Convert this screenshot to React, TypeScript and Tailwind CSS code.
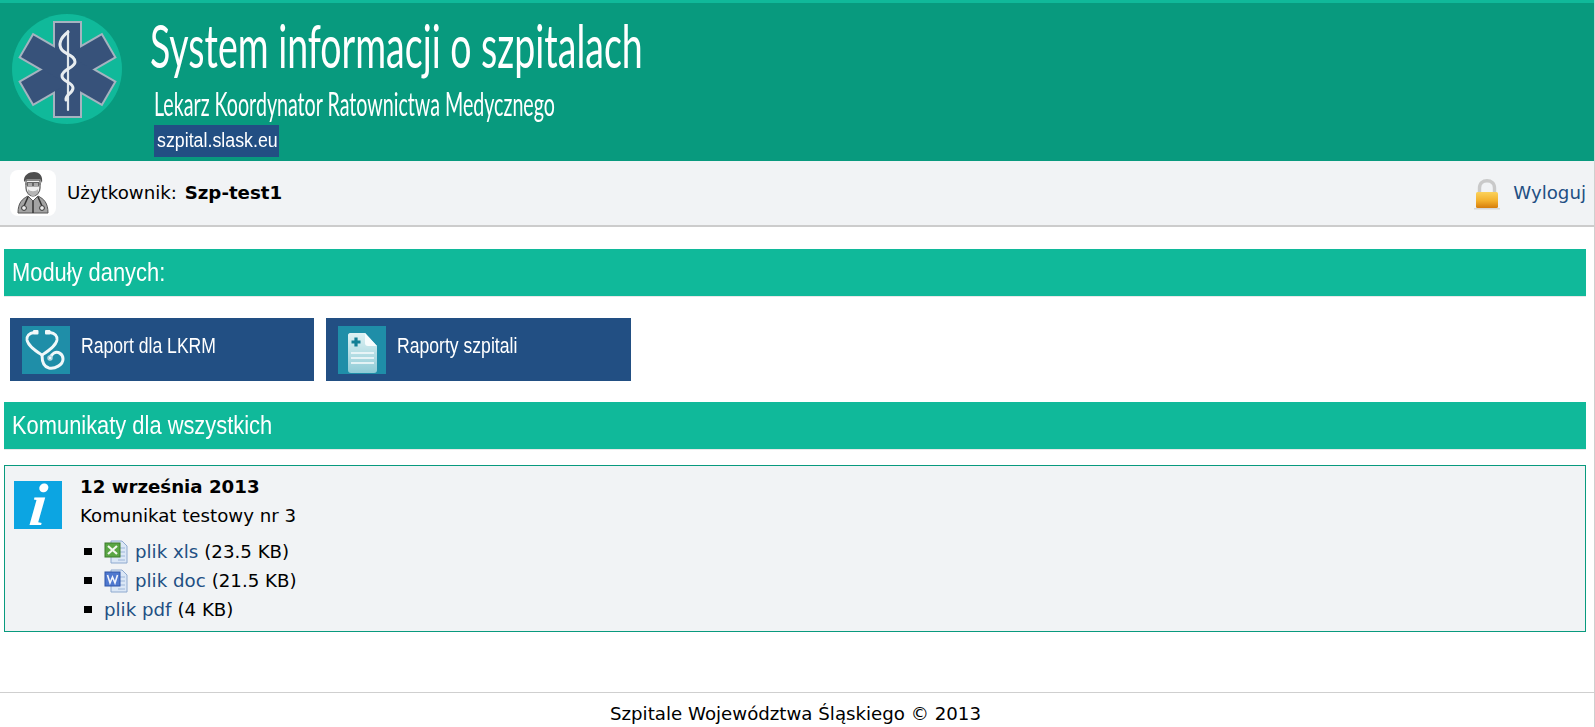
const BASE = "font-['DejaVu_Sans',Verdana,sans-serif]";
const NARROW = "font-['Liberation_Sans',Arial,sans-serif]";

function StarLogo() {
  const angles = [0, 60, 120];
  return (
    <svg width="110" height="110" viewBox="0 0 110 110" className="shrink-0 blur-[0.3px]">
      <circle cx="55" cy="55" r="55" fill="#10b99a" />
      {angles.map((a) => (
        <rect key={a} x="42" y="8" width="27" height="95" fill="#a5b3c0" stroke="#a5b3c0" strokeWidth="2" transform={`rotate(${a} 55.5 55.5)`} />
      ))}
      {angles.map((a) => (
        <rect key={a} x="43" y="9" width="25" height="93" fill="#37527a" transform={`rotate(${a} 55.5 55.5)`} />
      ))}
      <path d="M56 17 L56 96" stroke="#dfe6ea" strokeWidth="2.2" strokeLinecap="round" />
      <path
        d="M56 18 C48 24 46 31 50 36 C54 41 63 41 63 48 C63 54 50 55 50 62 C50 68 61 68 61 74 C61 80 53 80 54 86"
        fill="none"
        stroke="#e8edf0"
        strokeWidth="3"
        strokeLinecap="round"
      />
    </svg>
  );
}

function DoctorAvatar() {
  return (
    <div className="h-[46px] w-[46px] shrink-0 rounded-lg bg-white">
      <svg width="46" height="46" viewBox="0 0 46 46" className="blur-[0.3px]">
        <path d="M14 12 C13 5 19 2 24 2 C30 2 33 6 32 13 L30 9 L17 9 Z" fill="#4f4f4f" />
        <path d="M16 10 L30 10 L30 18 C30 23 26 26 23 26 C20 26 16 23 16 18 Z" fill="#f2f2f2" stroke="#666" strokeWidth="1.3" />
        <path d="M15 14 H31" stroke="#777" strokeWidth="1.2" />
        <rect x="17.5" y="12.5" width="5" height="3.5" fill="none" stroke="#666" />
        <rect x="23.5" y="12.5" width="5" height="3.5" fill="none" stroke="#666" />
        <path d="M18 19 C20 22 26 22 28 19 L28 23 L23 27 L18 23 Z" fill="#b5b5b5" />
        <path d="M8 43 C8 33 12 29 18 26 L23 31 L28 26 C34 29 38 33 38 43 Z" fill="#a3a3a3" stroke="#555" strokeWidth="1" />
        <path d="M18 27 L14 36 M28 27 L32 36 M23 31 V43" stroke="#333" strokeWidth="1.5" fill="none" />
        <circle cx="14" cy="38" r="2.4" fill="#eee" stroke="#333" />
        <circle cx="32" cy="38" r="2.4" fill="#eee" stroke="#333" />
      </svg>
    </div>
  );
}

function LockIcon() {
  return (
    <svg width="28" height="31" viewBox="0 0 28 31" className="mt-[3px] shrink-0">
      <defs>
        <linearGradient id="lockBody" x1="0" y1="0" x2="0" y2="1">
          <stop offset="0" stopColor="#fbd25b" />
          <stop offset="0.55" stopColor="#f3b02c" />
          <stop offset="1" stopColor="#d67d0c" />
        </linearGradient>
      </defs>
      <path d="M6.5 14 V9 C6.5 4 10 1.8 14 1.8 C18 1.8 21.5 4 21.5 9 V14" fill="none" stroke="#c9c9c9" strokeWidth="3.4" />
      <rect x="3" y="13" width="22" height="16" rx="1.5" fill="url(#lockBody)" />
      <rect x="1" y="29" width="26" height="1.5" fill="#bbb" opacity="0.5" />
    </svg>
  );
}

function StethoscopeIcon() {
  return (
    <div className="h-12 w-12 shrink-0 bg-[#1f8ea8]">
      <svg width="48" height="48" viewBox="0 0 48 48" fill="none" stroke="#f0f8fa" strokeLinecap="round">
        <path d="M12 6.5 C7 7 4.5 10 5 14 C6 20 14 25 20 29 C26 25 34 20 35 14 C35.5 10 33 7 28 6.5" strokeWidth="2.8" />
        <path d="M20 29 C20 36 22 41 27 42 C33 43 41 39 41 33 C41 28 36 25 32 27 C30 28 29 30 28 32" strokeWidth="3" />
        <rect x="11" y="4" width="5.5" height="4.5" rx="1" fill="#f0f8fa" strokeWidth="0" />
        <rect x="23" y="4" width="5.5" height="4.5" rx="1" fill="#f0f8fa" strokeWidth="0" />
        <circle cx="28" cy="32" r="2" strokeWidth="1.4" stroke="#b9dbe3" />
      </svg>
    </div>
  );
}

function ReportIcon() {
  return (
    <div className="h-12 w-12 shrink-0 bg-[#1f8ea8]">
      <svg width="48" height="48" viewBox="0 0 48 48">
        <defs>
          <linearGradient id="reportPage" x1="0" y1="0" x2="0" y2="1">
            <stop offset="0" stopColor="#dff2f4" />
            <stop offset="1" stopColor="#8fcbd6" />
          </linearGradient>
        </defs>
        <path d="M12 7 H27 L39 20 V44 C39 46 38 47 36 47 H13 C11 47 10 46 10 44 V9 C10 8 11 7 12 7 Z" fill="url(#reportPage)" />
        <path d="M27 7 L39 20 L30 20 C28 20 27 19 27 17 Z" fill="#f7fcfd" />
        <path d="M18 11.5 V20.5 M13.5 16 H22.5" stroke="#127f95" strokeWidth="3.2" />
        <path d="M13 27 H36 M13 32 H36 M13 37 H36" stroke="#f7fcfd" strokeWidth="1.6" />
      </svg>
    </div>
  );
}

function InfoIcon() {
  return (
    <div className="flex h-12 w-12 shrink-0 items-center justify-center bg-[#0ca5e2]">
      <span className="-skew-x-6 font-['Liberation_Serif',serif] text-[60px] leading-[48px] font-bold text-white italic">i</span>
    </div>
  );
}

function ExcelIcon() {
  return (
    <svg width="24" height="24" viewBox="0 0 24 24" className="shrink-0">
      <path d="M7 1 H18 L23 6 V23 H7 Z" fill="#dbe7f6" stroke="#8ea9cf" />
      <path d="M14 8 H21 M14 12 H21 M14 16 H21 M14 20 H21" stroke="#9db6d8" />
      <rect x="1" y="3" width="15" height="14" fill="#5aa644" stroke="#3d7d2c" />
      <path d="M4 6 L13 14 M13 6 L4 14" stroke="#f3f8ef" strokeWidth="2.2" />
    </svg>
  );
}

function WordIcon() {
  return (
    <svg width="24" height="24" viewBox="0 0 24 24" className="shrink-0">
      <path d="M7 1 H18 L23 6 V23 H7 Z" fill="#dbe7f6" stroke="#8ea9cf" />
      <path d="M14 8 H21 M14 12 H21 M14 16 H21 M14 20 H21" stroke="#9db6d8" />
      <rect x="1" y="3" width="15" height="14" fill="#4f78cf" stroke="#2f55a8" />
      <path d="M3.5 6 L6 14 L8.5 8 L11 14 L13.5 6" fill="none" stroke="#f2f5fc" strokeWidth="1.6" />
    </svg>
  );
}

function SectionHeading({ children }: { children: string }) {
  return (
    <div className="flex h-[47px] items-center bg-[#10b99a] pl-2 shadow-[0_1px_0_#e8e8e8]">
      <span className={`${NARROW} origin-left scale-x-[0.875] text-[25px] leading-none whitespace-nowrap text-white`}>{children}</span>
    </div>
  );
}

function ModuleButton({ label, width, icon }: { label: string; width: string; icon: React.ReactNode }) {
  return (
    <a className={`flex h-[63px] ${width} items-start gap-[11px] bg-[#224f83] pt-2 pl-3`}>
      {icon}
      <span className={`${NARROW} mt-[8px] origin-left scale-x-[0.8] text-[22px] leading-[24px] whitespace-nowrap text-white`}>{label}</span>
    </a>
  );
}

function Attachment({ icon, name, size }: { icon?: React.ReactNode; name: string; size: string }) {
  return (
    <li className="flex h-[29px] items-center">
      <span className="mr-3 h-[7px] w-2 shrink-0 bg-black" />
      {icon && <span className="mr-[7px] flex">{icon}</span>}
      <a className="text-[#224f83]">{name}</a>
      <span className="ml-[6px]">{size}</span>
    </li>
  );
}

export default function App() {
  return (
    <div className={`${BASE} flex h-[727px] flex-col overflow-hidden border-r border-[#cfcfcf] bg-white text-[18.2px] text-black`}>
      <header className="flex h-[161px] shrink-0 border-t-[3px] border-[#10b99a] bg-[#089a7e] pt-[11px] pl-3">
        <StarLogo />
        <div className="ml-[30px] flex flex-col items-start">
          <h1 className="-mt-[4px] -ml-[2px] h-[75px] origin-left scale-x-[0.625] font-['Lato',sans-serif] text-[60px] leading-[70px] font-normal whitespace-nowrap text-white">
            System informacji o szpitalach
          </h1>
          <p className="mt-[3px] ml-[2px] h-[37px] origin-left scale-x-[0.614] font-['Lato',sans-serif] text-[32px] leading-[32px] whitespace-nowrap text-white">
            Lekarz Koordynator Ratownictwa Medycznego
          </p>
          <div className={`${NARROW} ml-[2px] flex h-[32px] w-[125px] items-center bg-[#224f83] pb-[2px] pl-[3px] text-[20px] text-white`}>
            <span className="origin-left scale-x-[0.89] whitespace-nowrap">szpital.slask.eu</span>
          </div>
        </div>
      </header>

      <div className="flex h-[66px] shrink-0 items-center border-b-2 border-[#cccccc] bg-[#f1f3f5] pr-[8px] pl-[10px]">
        <DoctorAvatar />
        <span className="ml-[11px]">
          Użytkownik: <b className="ml-[2px]">Szp-test1</b>
        </span>
        <div className="ml-auto flex items-center gap-[12px]">
          <LockIcon />
          <a className="text-[#224f83]">Wyloguj</a>
        </div>
      </div>

      <main className="flex flex-1 flex-col pt-[22px] pr-[8px] pl-1">
        <SectionHeading>Moduły danych:</SectionHeading>
        <div className="mt-[22px] flex gap-3 pl-[6px]">
          <ModuleButton label="Raport dla LKRM" width="w-[304px]" icon={<StethoscopeIcon />} />
          <ModuleButton label="Raporty szpitali" width="w-[305px]" icon={<ReportIcon />} />
        </div>
        <div className="mt-[21px]">
          <SectionHeading>Komunikaty dla wszystkich</SectionHeading>
        </div>
        <section className="mt-4 flex h-[167px] border border-[#089a7e] bg-[#f1f3f5] pt-[15px] pl-[9px]">
          <InfoIcon />
          <div className="ml-[18px]">
            <h3 className="-mt-[6px] leading-[24px] font-bold">12 września 2013</h3>
            <p className="mt-[5px] leading-[24px]">Komunikat testowy nr 3</p>
            <ul className="mt-[9px] ml-[4px]">
              <Attachment icon={<ExcelIcon />} name="plik xls" size="(23.5 KB)" />
              <Attachment icon={<WordIcon />} name="plik doc" size="(21.5 KB)" />
              <Attachment name="plik pdf" size="(4 KB)" />
            </ul>
          </div>
        </section>
      </main>

      <footer className="flex h-[35px] shrink-0 items-center justify-center border-t border-[#cfcfcf] pt-[7px] pr-[3px]">
        Szpitale Województwa Śląskiego © 2013
      </footer>
    </div>
  );
}
